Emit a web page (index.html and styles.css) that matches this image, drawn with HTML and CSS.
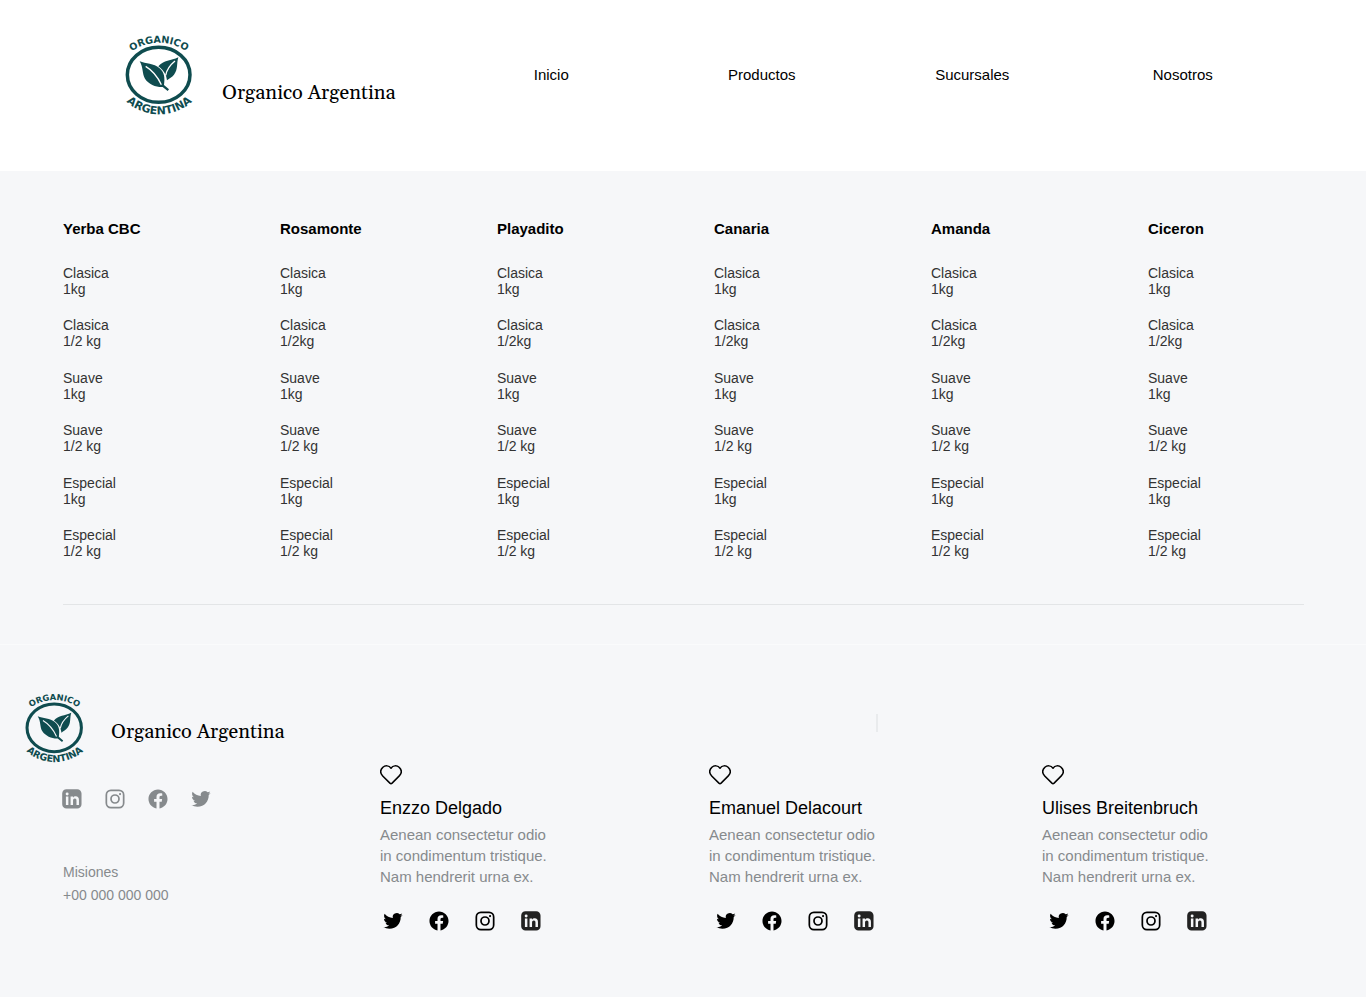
FILE: index.html
```html
<!DOCTYPE html>
<html lang="es">
<head>
<meta charset="utf-8">
<meta name="viewport" content="width=device-width, initial-scale=1">
<title>Organico Argentina</title>
<link rel="stylesheet" href="styles.css">
</head>
<body>
<svg class="sprite" aria-hidden="true">
  <defs>
    <path id="arc-top" d="M8 125A143 143 0 0 1 256 125"/>
    <path id="arc-bottom" d="M6 194A146 146 0 0 0 260 194"/>
  </defs>
  <symbol id="logo" class="logo" viewBox="30 30 204 240">
    <ellipse cx="131" cy="149.500" rx="94" ry="82.500" fill="none" stroke="currentColor" stroke-width="10.500"/>
    <path fill="currentColor" d="M74 109C92 117 117 115 133 129C149 142 150 160 147 180L162 193L158 198L143 186C124 187 101 178 90 161C81 147 85 126 74 109Z"/>
    <path fill="currentColor" d="M190 97C184 117 190 132 177 149C171 157 163 160 156 166C154 151 149 138 130 124C146 105 168 108 190 97Z"/>
    <path class="logo-vein" d="M92 124C112 136 128 155 139 179M180 108C164 121 155 135 152 151"/>
    <text class="logo-text logo-text-top"><textPath href="#arc-top" startOffset="50%" text-anchor="middle">ORGANICO</textPath></text>
    <text class="logo-text logo-text-bottom"><textPath href="#arc-bottom" startOffset="50%" text-anchor="middle">ARGENTINA</textPath></text>
  </symbol>
  <symbol id="twitter" viewBox="1.500 1.500 21 21"><path fill="currentColor" d="M22.162 5.656a8.384 8.384 0 0 1-2.402.658A4.196 4.196 0 0 0 21.600 4c-.82.488-1.719.83-2.656 1.015a4.182 4.182 0 0 0-7.126 3.814 11.874 11.874 0 0 1-8.620-4.370 4.168 4.168 0 0 0-.566 2.103c0 1.450.738 2.731 1.860 3.481a4.168 4.168 0 0 1-1.894-.523v.052a4.185 4.185 0 0 0 3.355 4.101 4.210 4.210 0 0 1-1.890.072A4.185 4.185 0 0 0 7.970 16.650a8.394 8.394 0 0 1-6.191 1.732 11.830 11.830 0 0 0 6.410 1.880c7.693 0 11.900-6.373 11.900-11.900 0-.18-.005-.362-.013-.54a8.496 8.496 0 0 0 2.087-2.165z"/></symbol>
  <symbol id="facebook" viewBox="1.500 1.500 21 21"><path fill="currentColor" d="M22 12c0-5.520-4.480-10-10-10S2 6.480 2 12c0 4.990 3.660 9.130 8.440 9.880v-6.990H7.900V12h2.540V9.800c0-2.510 1.490-3.890 3.780-3.890 1.090 0 2.240.195 2.240.195v2.460h-1.260c-1.240 0-1.630.77-1.630 1.560V12h2.770l-.44 2.890h-2.330v6.990C18.340 21.130 22 16.990 22 12z"/></symbol>
  <symbol id="instagram" viewBox="1.500 1.500 21 21"><rect x="2.900" y="2.900" width="18.200" height="18.200" rx="4.800" fill="none" stroke="currentColor" stroke-width="1.800"/><circle cx="12" cy="12" r="4.200" fill="none" stroke="currentColor" stroke-width="1.800"/><circle cx="17.300" cy="6.800" r="1.150" fill="currentColor"/></symbol>
  <symbol id="linkedin" viewBox="1.500 1.500 21 21"><path fill="currentColor" fill-rule="evenodd" d="M6.500 1.700h11a4.500 4.500 0 0 1 4.500 4.500v11.300a4.500 4.500 0 0 1-4.500 4.500H6.200a4.500 4.500 0 0 1-4.500-4.500V6.200a4.500 4.500 0 0 1 4.800-4.500zM5.600 9.500V18.200h2.600V9.500zM6.900 5.100a1.550 1.550 0 1 0 0 3.100 1.550 1.550 0 0 0 0-3.100zM10.500 9.500V18.200h2.600v-4.500c0-1.400.7-2.200 1.900-2.200s1.700.8 1.700 2.200v4.500h2.600v-5.200c0-2.500-1.300-3.800-3.300-3.800-1.300 0-2.300.5-2.900 1.500V9.500z"/></symbol>
  <symbol id="heart" viewBox="0 0 22 20"><path fill="none" stroke="currentColor" stroke-width="1.500" stroke-linejoin="round" d="M11 3.200C9 .4 5.300.1 2.900 2.300C.2 4.900.2 8.300 2.700 10.900L9.900 18.100Q11 19.100 12.100 18.100L19.300 10.900C21.800 8.300 21.800 4.900 19.100 2.300C16.700.1 13 .4 11 3.200Z"/></symbol>
</svg>

<header class="header">
  <a class="brand" href="#">
    <svg class="brand-logo" aria-hidden="true"><use href="#logo"/></svg>
    <span class="brand-name">Organico Argentina</span>
  </a>
  <nav class="nav">
    <a href="#">Inicio</a>
    <a href="#">Productos</a>
    <a href="#">Sucursales</a>
    <a href="#">Nosotros</a>
  </nav>
</header>

<main class="products">
  <div class="products-grid">
    <section>
      <h2>Yerba CBC</h2>
      <ul><li>Clasica<br>1kg</li><li>Clasica<br>1/2 kg</li><li>Suave<br>1kg</li><li>Suave<br>1/2 kg</li><li>Especial<br>1kg</li><li>Especial<br>1/2 kg</li></ul>
    </section>
    <section>
      <h2>Rosamonte</h2>
      <ul><li>Clasica<br>1kg</li><li>Clasica<br>1/2kg</li><li>Suave<br>1kg</li><li>Suave<br>1/2 kg</li><li>Especial<br>1kg</li><li>Especial<br>1/2 kg</li></ul>
    </section>
    <section>
      <h2>Playadito</h2>
      <ul><li>Clasica<br>1kg</li><li>Clasica<br>1/2kg</li><li>Suave<br>1kg</li><li>Suave<br>1/2 kg</li><li>Especial<br>1kg</li><li>Especial<br>1/2 kg</li></ul>
    </section>
    <section>
      <h2>Canaria</h2>
      <ul><li>Clasica<br>1kg</li><li>Clasica<br>1/2kg</li><li>Suave<br>1kg</li><li>Suave<br>1/2 kg</li><li>Especial<br>1kg</li><li>Especial<br>1/2 kg</li></ul>
    </section>
    <section>
      <h2>Amanda</h2>
      <ul><li>Clasica<br>1kg</li><li>Clasica<br>1/2kg</li><li>Suave<br>1kg</li><li>Suave<br>1/2 kg</li><li>Especial<br>1kg</li><li>Especial<br>1/2 kg</li></ul>
    </section>
    <section>
      <h2>Ciceron</h2>
      <ul><li>Clasica<br>1kg</li><li>Clasica<br>1/2kg</li><li>Suave<br>1kg</li><li>Suave<br>1/2 kg</li><li>Especial<br>1kg</li><li>Especial<br>1/2 kg</li></ul>
    </section>
  </div>
</main>

<footer class="footer">
  <div class="company">
    <a class="brand brand-small" href="#">
      <svg class="brand-logo" aria-hidden="true"><use href="#logo"/></svg>
      <span class="brand-name">Organico Argentina</span>
    </a>
    <div class="company-links">
      <a href="#" aria-label="LinkedIn"><svg class="icon"><use href="#linkedin"/></svg></a>
      <a href="#" aria-label="Instagram"><svg class="icon"><use href="#instagram"/></svg></a>
      <a href="#" aria-label="Facebook"><svg class="icon"><use href="#facebook"/></svg></a>
      <a href="#" aria-label="Twitter"><svg class="icon"><use href="#twitter"/></svg></a>
    </div>
    <address class="contact">Misiones<br>+00 000 000 000</address>
  </div>

  <article class="member member-first">
    <button class="like" type="button" aria-label="Me gusta"><svg class="heart"><use href="#heart"/></svg></button>
    <h3>Enzzo Delgado</h3>
    <p>Aenean consectetur odio<br>in condimentum tristique.<br>Nam hendrerit urna ex.</p>
    <div class="member-links">
      <a href="#" aria-label="Twitter"><svg class="icon"><use href="#twitter"/></svg></a>
      <a href="#" aria-label="Facebook"><svg class="icon"><use href="#facebook"/></svg></a>
      <a href="#" aria-label="Instagram"><svg class="icon"><use href="#instagram"/></svg></a>
      <a class="soft" href="#" aria-label="LinkedIn"><svg class="icon"><use href="#linkedin"/></svg></a>
    </div>
  </article>
  <article class="member member-marked">
    <button class="like" type="button" aria-label="Me gusta"><svg class="heart"><use href="#heart"/></svg></button>
    <h3>Emanuel Delacourt</h3>
    <p>Aenean consectetur odio<br>in condimentum tristique.<br>Nam hendrerit urna ex.</p>
    <div class="member-links">
      <a href="#" aria-label="Twitter"><svg class="icon"><use href="#twitter"/></svg></a>
      <a href="#" aria-label="Facebook"><svg class="icon"><use href="#facebook"/></svg></a>
      <a href="#" aria-label="Instagram"><svg class="icon"><use href="#instagram"/></svg></a>
      <a class="soft" href="#" aria-label="LinkedIn"><svg class="icon"><use href="#linkedin"/></svg></a>
    </div>
  </article>
  <article class="member">
    <button class="like" type="button" aria-label="Me gusta"><svg class="heart"><use href="#heart"/></svg></button>
    <h3>Ulises Breitenbruch</h3>
    <p>Aenean consectetur odio<br>in condimentum tristique.<br>Nam hendrerit urna ex.</p>
    <div class="member-links">
      <a href="#" aria-label="Twitter"><svg class="icon"><use href="#twitter"/></svg></a>
      <a href="#" aria-label="Facebook"><svg class="icon"><use href="#facebook"/></svg></a>
      <a href="#" aria-label="Instagram"><svg class="icon"><use href="#instagram"/></svg></a>
      <a class="soft" href="#" aria-label="LinkedIn"><svg class="icon"><use href="#linkedin"/></svg></a>
    </div>
  </article>
</footer>
</body>
</html>
```

FILE: styles.css
```css
* {
  box-sizing: border-box;
}

body {
  margin: 0;
  min-height: 100vh;
  background: #f6f7f9;
  color: #000;
  font-family: "Liberation Sans", Arial, sans-serif;
  font-size: 15px;
}

h2, h3, p, ul {
  margin: 0;
  padding: 0;
}

a {
  color: inherit;
  text-decoration: none;
}

svg {
  display: block;
}

.sprite {
  position: absolute;
  width: 0;
  height: 0;
}

.header {
  display: flex;
  align-items: flex-start;
  padding: 35px 78px 56px 125px;
  background: #fff;
}

.brand {
  display: flex;
  align-items: flex-end;
  gap: 29px;
  width: 321px;
}

.logo {
  overflow: visible;
}

.brand-logo {
  overflow: visible;
  width: 68px;
  height: 80px;
  color: #0f4c4f;
  --logo-bg: #fff;
}

.brand-name {
  padding-bottom: 9px;
  font-family: Gelasio, Georgia, "Liberation Serif", serif;
  font-size: 20px;
  line-height: 26px;
  white-space: nowrap;
}

.logo-vein {
  fill: none;
  stroke: var(--logo-bg);
  stroke-width: 4px;
}

.logo-text {
  fill: currentColor;
  font-family: "DejaVu Sans", sans-serif;
  font-weight: bold;
}

.logo-text-top {
  font-size: 29px;
}

.logo-text-bottom {
  font-size: 33px;
}

.nav {
  flex: 1;
  display: grid;
  grid-template-columns: repeat(4, 1fr);
  padding-top: 30px;
  line-height: 20px;
  text-align: center;
}

.products {
  padding: 48px 62px 39px 63px;
  border-bottom: 1px solid #fafbfc;
}

.products-grid {
  display: grid;
  grid-template-columns: repeat(6, 1fr);
  column-gap: 61px;
  padding-bottom: 45px;
  border-bottom: 1px solid #e3e5e7;
}

.products h2 {
  margin-bottom: 26px;
  font-size: 15px;
  line-height: 20px;
}

.products ul {
  display: flex;
  flex-direction: column;
  justify-content: space-between;
  min-height: 294px;
  list-style: none;
  color: #333;
  font-size: 14px;
  line-height: 16px;
}

.footer {
  display: grid;
  grid-template-columns: 380fr 329fr 333fr 324fr;
  padding: 48px 0 64px;
}

.company {
  padding-left: 25px;
  color: #868a8d;
}

.brand-small {
  gap: 27px;
  width: auto;
  color: #000;
}

.brand-small .brand-logo {
  width: 59px;
  height: 70px;
  --logo-bg: #f6f7f9;
}

.brand-small .brand-name {
  padding-bottom: 18px;
}

.icon {
  width: 20px;
  height: 20px;
}

.company-links {
  display: flex;
  gap: 23px;
  padding: 26px 0 0 37px;
}

.contact {
  padding: 52px 0 0 38px;
  font-size: 14px;
  font-style: normal;
  line-height: 23px;
}

.member {
  padding-top: 72px;
}

.member-marked {
  padding-top: 21px;
}

.member-marked::before {
  content: "";
  display: block;
  width: 2px;
  height: 18px;
  margin: 0 0 33px 167px;
  background: #e9ebed;
}

.like {
  display: block;
  padding: 0;
  border: 0;
  background: none;
  color: #000;
}

.heart {
  width: 22px;
  height: 20px;
}

.member h3 {
  margin: 11px 0 4px;
  font-size: 18px;
  font-weight: normal;
  line-height: 24px;
}

.member p {
  color: #868a8d;
  line-height: 21px;
}

.member-links {
  display: flex;
  gap: 26px;
  padding: 24px 0 0 7px;
}

.member-first .member-links {
  padding-left: 3px;
}

.soft {
  color: #222;
}
```
